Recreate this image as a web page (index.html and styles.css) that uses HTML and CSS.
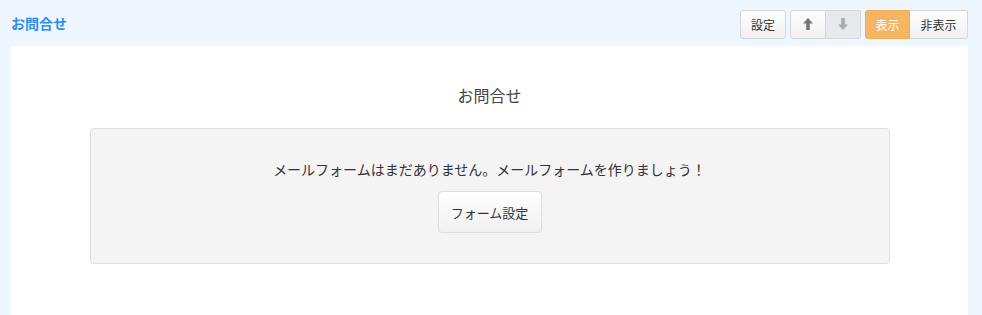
FILE: index.html
```html
<!DOCTYPE html>
<html lang="ja">
<head>
<meta charset="utf-8">
<link rel="stylesheet" href="styles.css">
</head>
<body>
<div class="page">
  <header class="bar">
    <h2 class="bar-title">お問合せ</h2>
    <div class="tools">
      <button class="btn">設定</button>
      <div class="group">
        <button class="btn icon"><svg width="10" height="12" viewBox="0 0 10 12"><path d="M5 0 L10 5.5 H6.8 V12 H3.2 V5.5 H0 Z" fill="#777"/></svg></button>
        <button class="btn icon disabled"><svg width="10" height="12" viewBox="0 0 10 12"><path d="M5 12 L10 6.5 H6.8 V0 H3.2 V6.5 H0 Z" fill="#aaa"/></svg></button>
      </div>
      <div class="group">
        <button class="btn active">表示</button>
        <button class="btn hide">非表示</button>
      </div>
    </div>
  </header>
  <main class="panel">
    <h3 class="panel-title">お問合せ</h3>
    <div class="well">
      <p class="msg">メールフォームはまだありません。メールフォームを作りましょう！</p>
      <button class="btn big">フォーム設定</button>
    </div>
  </main>
</div>
</body>
</html>
```
FILE: styles.css
```css
* { box-sizing: border-box; }
html, body { margin: 0; padding: 0; height: 100%; }
body {
  background: #eef6ff;
  font-family: "Noto Sans CJK JP", "Noto Sans", sans-serif;
  color: #333;
}
.page { padding: 0 14px 0 11px; height: 100%; display: flex; flex-direction: column; }
.bar {
  height: 46px;
  display: flex;
  align-items: center;
  justify-content: space-between;
}
.bar-title {
  margin: 0;
  font-size: 14px;
  font-weight: bold;
  color: #2a8ff0;
  line-height: 1;
}
.tools { display: flex; gap: 4px; align-items: center; margin-top: 2px; }
.group { display: flex; }
.btn {
  font-family: inherit;
  font-size: 12px;
  color: #333;
  height: 29px;
  padding: 0 10px;
  border: 1px solid #d6d6d6;
  border-radius: 3px;
  background: linear-gradient(#ffffff, #f0f0f0);
  line-height: 27px;
  cursor: pointer;
}
.group .btn { border-radius: 0; }
.group .btn:first-child { border-radius: 3px 0 0 3px; }
.group .btn:last-child { border-radius: 0 3px 3px 0; border-left: none; }
.btn.icon { width: 36px; padding: 0; display: flex; align-items: center; justify-content: center; }
.btn.icon.disabled { background: #e8e9ec; width: 35px; }
.btn.active { background: #f5b562; border-color: #f0ad55; color: #fff; width: 45px; padding: 0; }
.btn.hide { width: 58px; padding: 0; }
.panel {
  flex: 1;
  background: #fff;
  padding: 38px 0 0;
}
.panel-title {
  margin: 0;
  text-align: center;
  font-size: 16px;
  font-weight: normal;
  color: #444;
  line-height: 22px;
}
.well {
  width: 800px;
  margin: 22px auto 0;
  background: #f4f4f4;
  border: 1px solid #dedede;
  border-radius: 4px;
  height: 136px;
  display: flex;
  flex-direction: column;
  align-items: center;
  padding-top: 30px;
}
.msg {
  margin: 0;
  font-size: 14px;
  color: #333;
  line-height: 20px;
}
.btn.big {
  margin-top: 12px;
  height: 42px;
  width: 104px;
  font-size: 13px;
  padding: 0;
  border-radius: 4px;
  border-color: #dcdcdc;
}
```
